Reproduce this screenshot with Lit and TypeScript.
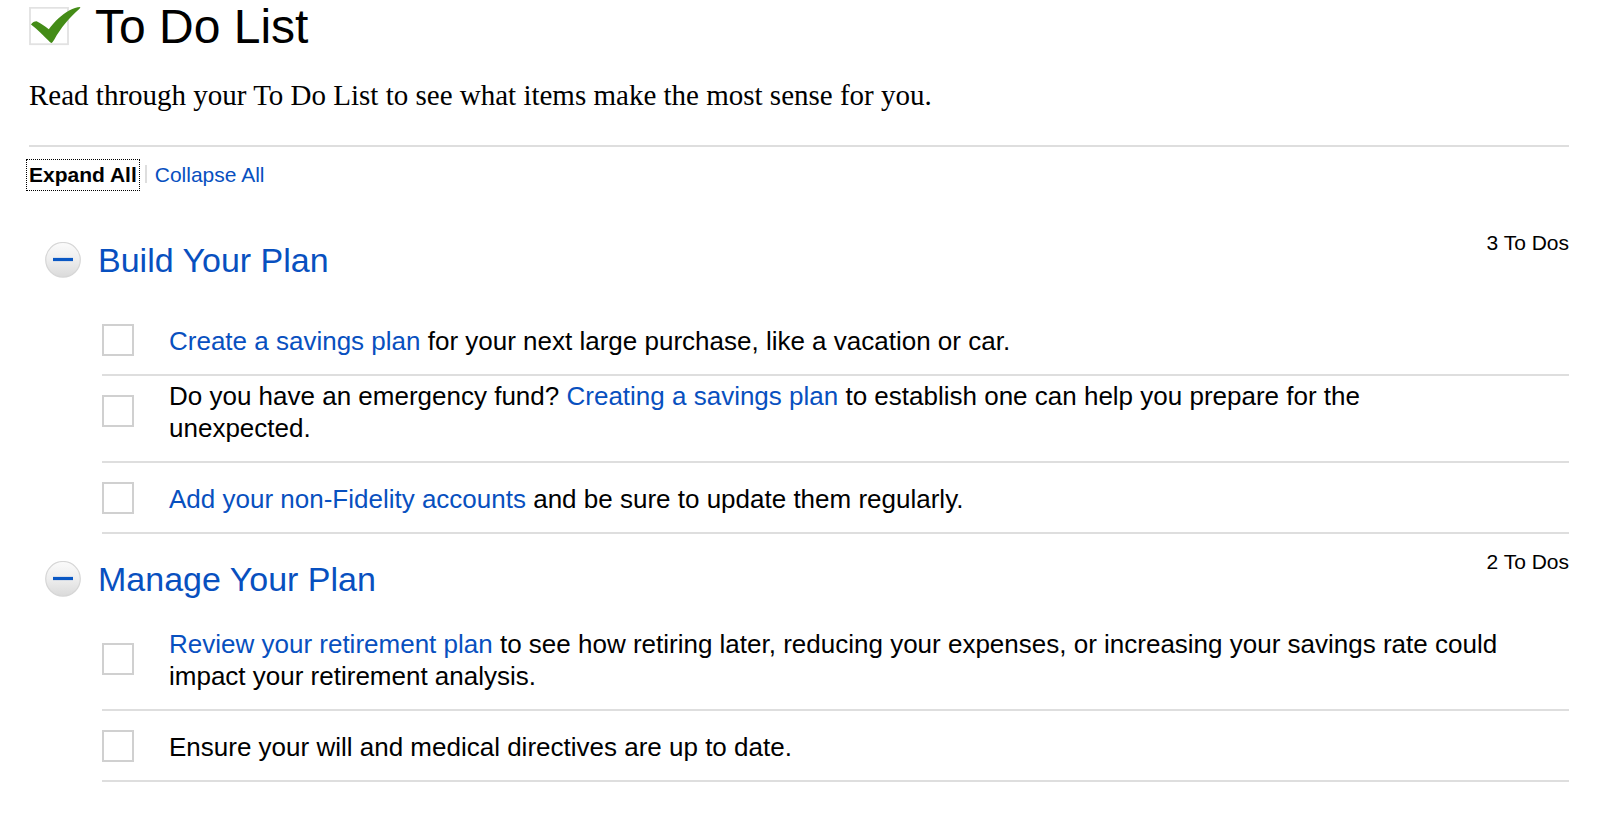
import { LitElement, html, css, svg, nothing } from "lit";
import { customElement, property, state } from "lit/decorators.js";

interface Task {
  id: string;
  before?: string;
  link?: string;
  after?: string;
}

interface Group {
  title: string;
  tasks: Task[];
}

const GROUPS: Group[] = [
  {
    title: "Build Your Plan",
    tasks: [
      {
        id: "savings",
        link: "Create a savings plan",
        after: " for your next large purchase, like a vacation or car.",
      },
      {
        id: "emergency",
        before: "Do you have an emergency fund? ",
        link: "Creating a savings plan",
        after: " to establish one can help you prepare for the unexpected.",
      },
      {
        id: "accounts",
        link: "Add your non-Fidelity accounts",
        after: " and be sure to update them regularly.",
      },
    ],
  },
  {
    title: "Manage Your Plan",
    tasks: [
      {
        id: "retirement",
        link: "Review your retirement plan",
        after:
          " to see how retiring later, reducing your expenses, or increasing your savings rate could impact your retirement analysis.",
      },
      {
        id: "will",
        before: "Ensure your will and medical directives are up to date.",
      },
    ],
  },
];

@customElement("todo-group")
class TodoGroup extends LitElement {
  @property({ attribute: false }) group!: Group;
  @property({ type: Boolean }) open = true;

  static styles = css`
    :host {
      display: block;
    }
    .header {
      display: flex;
      align-items: flex-start;
      justify-content: space-between;
      padding-left: 16px;
    }
    h2 {
      margin: 0;
      padding: 25px 0;
      font-size: 34px;
      font-weight: 400;
      line-height: 40px;
    }
    .toggle {
      display: flex;
      align-items: center;
      gap: 17px;
      padding: 0;
      border: 0;
      background: none;
      font: inherit;
      color: #0850bf;
      cursor: pointer;
    }
    .icon {
      flex: none;
      width: 36px;
      height: 36px;
    }
    .count {
      padding-top: 16px;
      font-size: 21px;
      line-height: 24px;
    }
    ul {
      margin: 0;
      padding: 0 0 0 73px;
      list-style: none;
    }
    li {
      display: flex;
      align-items: flex-start;
      gap: 35px;
      padding: 4px 69px 17px 0;
      border-bottom: 2px solid #dedede;
    }
    input {
      appearance: none;
      box-sizing: border-box;
      flex: none;
      width: 32px;
      height: 32px;
      margin: 15px 0 1px;
      border: 2px solid #d0d0d0;
      background: #fff;
    }
    input:checked {
      background: linear-gradient(#3f8b17, #3f8b17) center / 16px 16px no-repeat;
    }
    label {
      align-self: flex-end;
      font-size: 26px;
      line-height: 32px;
    }
    a {
      color: #0850bf;
      text-decoration: none;
    }
  `;

  private toggle() {
    this.dispatchEvent(new CustomEvent("toggle-group"));
  }

  render() {
    const { title, tasks } = this.group;
    return html`
      <div class="header">
        <h2>
          <button class="toggle" aria-expanded=${this.open} @click=${this.toggle}>
            <svg class="icon" viewBox="0 0 36 36" aria-hidden="true">
              <defs>
                <linearGradient id="face" x1="0" y1="0" x2="0" y2="1">
                  <stop offset="0" stop-color="#fbfbfb" />
                  <stop offset="0.5" stop-color="#eeeeee" />
                  <stop offset="1" stop-color="#dadada" />
                </linearGradient>
              </defs>
              <circle cx="18" cy="17.8" r="17.3" fill="url(#face)" stroke="#d6d6d6" stroke-width="1.2" />
              <path d="M8 17.5H28" stroke="#0a58c4" stroke-width="3.2" />
              ${this.open ? nothing : svg`<path d="M18 7.5V27.5" stroke="#0a58c4" stroke-width="3.2" />`}
            </svg>
            ${title}
          </button>
        </h2>
        <span class="count">${tasks.length} To Dos</span>
      </div>
      ${this.open
        ? html`<ul>
            ${tasks.map(
              (t) => html`<li>
                <input type="checkbox" id=${t.id} />
                <label for=${t.id}
                  >${t.before ?? nothing}${t.link ? html`<a href="#${t.id}">${t.link}</a>` : nothing}${t.after ?? nothing}</label
                >
              </li>`
            )}
          </ul>`
        : nothing}
    `;
  }
}

@customElement("app-root")
class AppRoot extends LitElement {
  @state() private open: boolean[] = GROUPS.map(() => true);

  static styles = css`
    :host {
      display: block;
      padding: 0 31px 40px 29px;
      background: #fff;
      color: #000;
      font-family: "Liberation Sans", Arial, Helvetica, sans-serif;
    }
    .title {
      display: flex;
      align-items: center;
      gap: 14px;
      margin: 0;
      font-size: 48px;
      font-weight: 400;
      line-height: 54px;
    }
    .tick {
      flex: none;
      width: 52px;
      height: 40px;
    }
    .intro {
      margin: 0;
      padding: 24px 0 33px;
      border-bottom: 2px solid #dedede;
      font-family: "Liberation Serif", "Times New Roman", serif;
      font-size: 29px;
      line-height: 34px;
    }
    .actions {
      display: flex;
      align-items: center;
      gap: 8px;
      padding: 15px 0 27px;
    }
    .actions button {
      padding: 0;
      border: 0;
      background: none;
      font: inherit;
      font-size: 21px;
      line-height: 26px;
      color: #0850bf;
      cursor: pointer;
    }
    .actions .current {
      color: #000;
      font-weight: 700;
      outline: 1px dotted #000;
      outline-offset: 2px;
    }
    .divider {
      width: 2px;
      height: 18px;
      margin-bottom: 2px;
      background: #dedede;
    }
  `;

  private setAll(value: boolean) {
    this.open = this.open.map(() => value);
  }

  private flip(index: number) {
    this.open = this.open.map((v, i) => (i === index ? !v : v));
  }

  render() {
    const allOpen = this.open.every((v) => v);
    const allClosed = this.open.every((v) => !v);
    return html`
      <h1 class="title">
        <svg class="tick" viewBox="0 0 52 40" aria-hidden="true">
          <rect x="1" y="0.8" width="38" height="36.4" fill="#fff" stroke="#e2e2e2" stroke-width="1.8" />
          <path
            d="M2 17.4C3.6 15.4 5.2 14.2 7.6 14.2C12 16.4 16 19 19.8 22.2C25.4 14.6 32.6 7.6 40.6 3.2C44.2 1.4 47.8 .1 51.4 0C51.2 .9 50.7 1.6 50 2.3C40.2 11 31.8 20.8 25.2 32.8C24.2 34.4 23.4 35.6 22.6 35.9C21.6 35.8 20.8 35 19.9 34C14.6 28.4 8.8 22.8 2 17.4Z"
            fill="#448c17"
          />
        </svg>
        To Do List
      </h1>
      <p class="intro">Read through your To Do List to see what items make the most sense for you.</p>
      <div class="actions">
        <button class=${allOpen ? "current" : ""} @click=${() => this.setAll(true)}>Expand All</button>
        <span class="divider"></span>
        <button class=${allClosed ? "current" : ""} @click=${() => this.setAll(false)}>Collapse All</button>
      </div>
      ${GROUPS.map(
        (g, i) => html`<todo-group .group=${g} .open=${this.open[i]} @toggle-group=${() => this.flip(i)}></todo-group>`
      )}
    `;
  }
}
